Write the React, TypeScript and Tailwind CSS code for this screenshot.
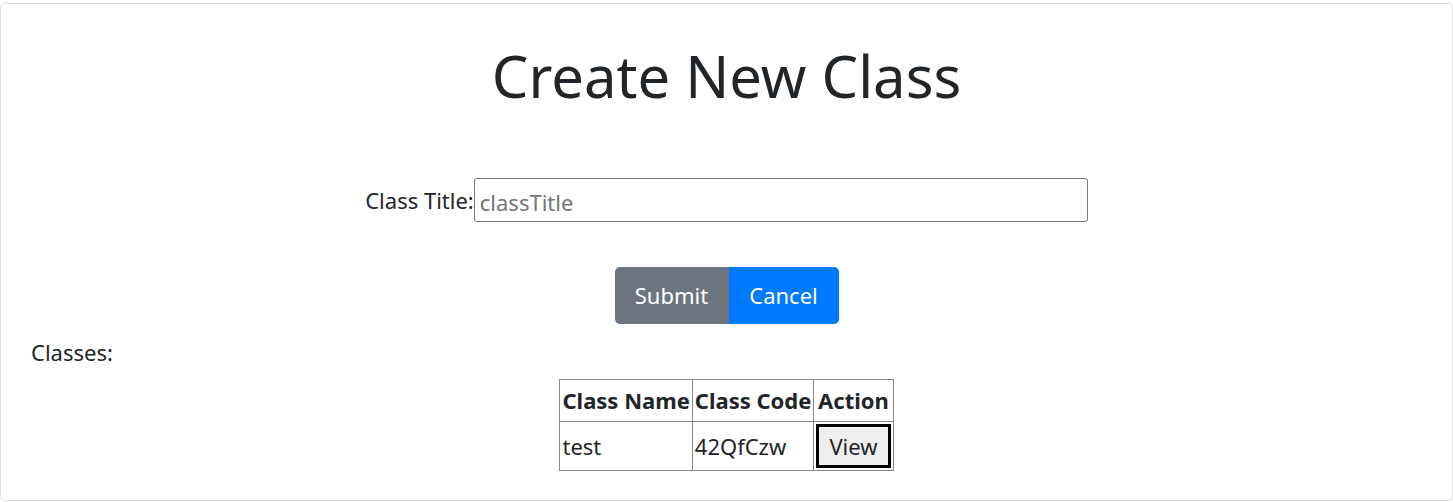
import React from "react";

const classes = [{ name: "test", code: "42QfCzw" }];

const App: React.FC = () => {
  return (
    <div className="w-[1453px] h-[502px] bg-white pt-[3px] font-['Noto_Sans',sans-serif] text-[#212529]">
      <div className="h-[498px] border border-[#dfdfdf] rounded-[5px] flex flex-col">
        {/* Title */}
        <h1 className="text-center text-[58px] leading-[72px] font-normal mt-[36px]">
          Create New Class
        </h1>

        {/* Form */}
        <div className="flex justify-center items-center mt-[66px]">
          <label className="text-[22px]">Class Title:</label>
          <input
            type="text"
            placeholder="classTitle"
            className="w-[614px] h-[44px] border border-[#767676] rounded-[3px] px-[5px] pt-[3px] text-[22px] placeholder:text-[#757575] outline-none"
          />
        </div>

        <div className="flex justify-center mt-[45px]">
          <button className="w-[114px] h-[57px] bg-[#6c757d] text-white text-[22px] rounded-l-[5px]">
            Submit
          </button>
          <button className="w-[110px] h-[57px] bg-[#007bff] text-white text-[22px] rounded-r-[5px]">
            Cancel
          </button>
        </div>

        {/* Classes list */}
        <div className="px-[30px] text-[22px] leading-[30px] mt-[13px]">Classes:</div>

        <div className="flex justify-center mt-[12px]">
          <table className="border-collapse border border-[#555] text-[22px]">
            <thead>
              <tr className="h-[42px]">
                <th className="border border-[#888] px-[2px] font-bold">Class Name</th>
                <th className="border border-[#888] px-[2px] font-bold">Class Code</th>
                <th className="border border-[#888] px-[2px] font-bold">Action</th>
              </tr>
            </thead>
            <tbody>
              {classes.map((c) => (
                <tr key={c.code} className="h-[49px]">
                  <td className="border border-[#888] px-[2px] text-left">{c.name}</td>
                  <td className="border border-[#888] px-[2px] text-left">{c.code}</td>
                  <td className="border border-[#888] px-[2px] text-center">
                    <button className="border-[3px] border-black bg-[#efefef] px-[10px] h-[44px] leading-none">
                      View
                    </button>
                  </td>
                </tr>
              ))}
            </tbody>
          </table>
        </div>
      </div>
    </div>
  );
};

export default App;
